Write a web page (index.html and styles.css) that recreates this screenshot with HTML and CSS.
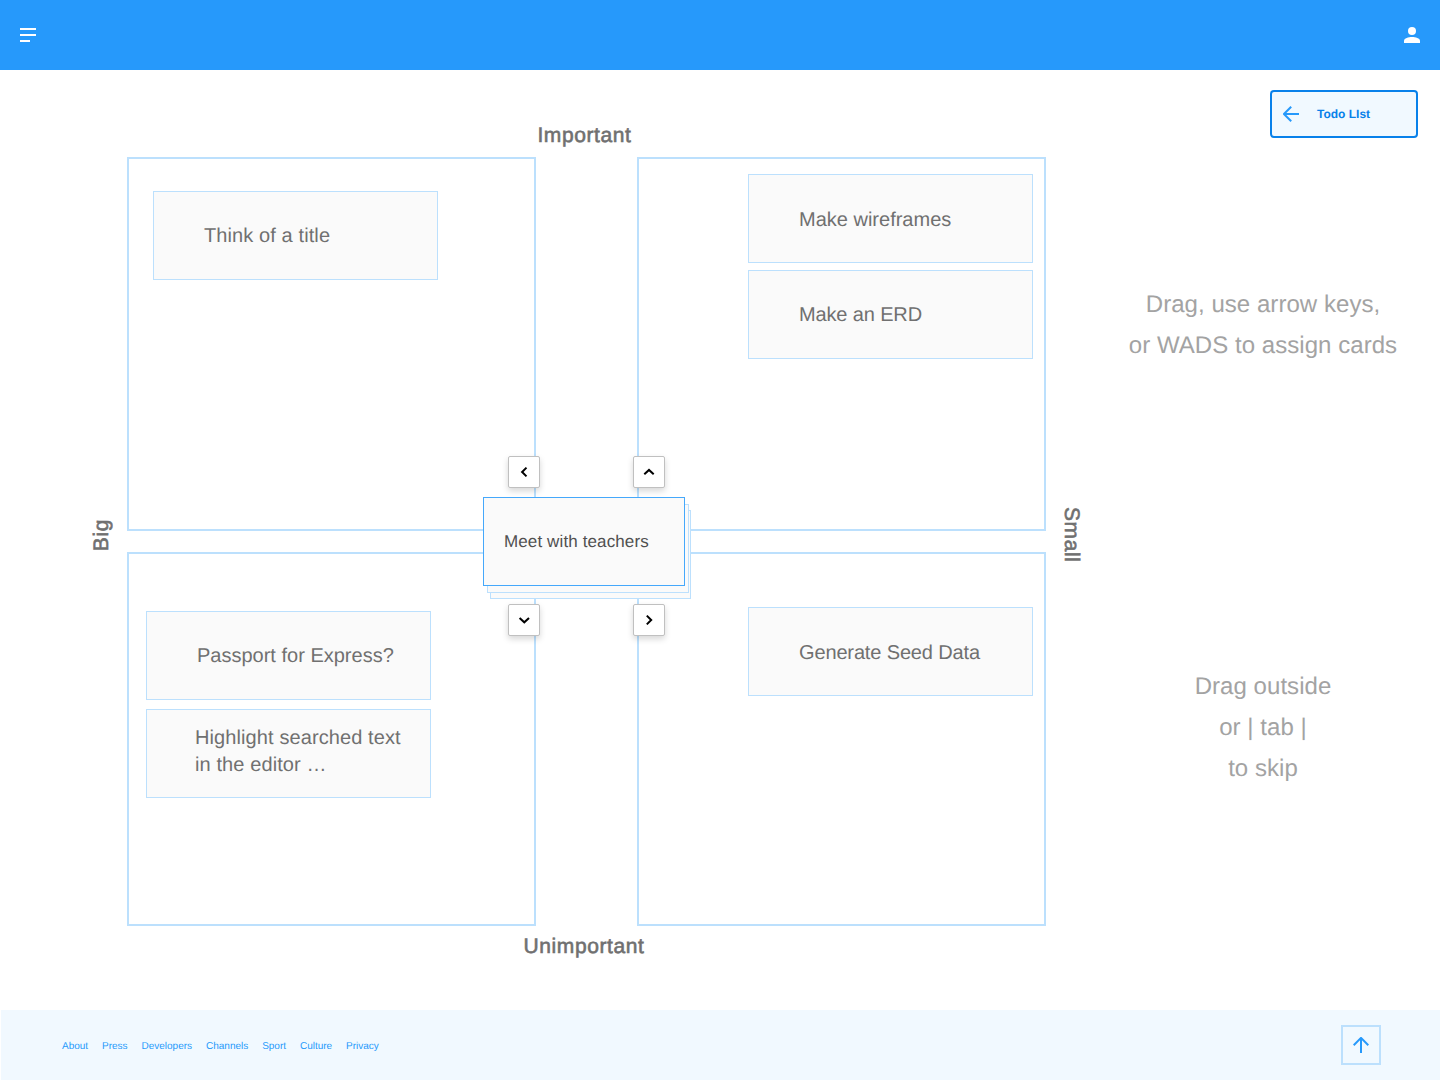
FILE: index.html
```html
<!DOCTYPE html>
<html lang="en">
<head>
<meta charset="utf-8">
<title>Todo List</title>
<link rel="stylesheet" href="styles.css">
</head>
<body>
<header class="topbar">
  <svg class="icon-menu" width="16" height="14" viewBox="0 0 16 14" fill="#fff"><path d="M0 0h16v2H0zM0 6h16v2H0zM0 12h10v2H0z"/></svg>
  <svg class="icon-user" width="16" height="16" viewBox="0 0 16 16" fill="#fff"><circle cx="8" cy="4" r="4"/><path d="M0 16v-2.200C0 11.200 4.500 10 8 10s8 1.200 8 3.800V16z"/></svg>
</header>
<main class="main">
  <div class="side side-left"><span class="axis axis-big">Big</span></div>
  <section class="matrix">
    <h2 class="axis axis-top">Important</h2>
    <div class="board">
      <div class="quadrant q1">
        <div class="card card-loose">Think of a title</div>
      </div>
      <div class="quadrant q2">
        <div class="card card-low">Make wireframes</div>
        <div class="card card-tight">Make an ERD</div>
      </div>
      <div class="quadrant q3">
        <div class="card">Passport for Express?</div>
        <div class="card card-loose card-long">Highlight searched text<br>in the editor …</div>
      </div>
      <div class="quadrant q4">
        <div class="card card-low card-tight">Generate Seed Data</div>
      </div>
      <div class="picker">
        <div class="sheet sheet-3"></div>
        <div class="sheet sheet-2"></div>
        <div class="sheet current">Meet with teachers</div>
        <button class="move move-left"><svg width="32" height="32" viewBox="0 0 32 32"><path d="M18.500 11.600 14.100 16l4.400 4.400"/></svg></button>
        <button class="move move-up"><svg width="32" height="32" viewBox="0 0 32 32"><path d="M11.300 18.300 16 13.900l4.700 4.400"/></svg></button>
        <button class="move move-down"><svg width="32" height="32" viewBox="0 0 32 32"><path d="M11.600 13.900 16.300 18.300l4.700-4.400"/></svg></button>
        <button class="move move-right"><svg width="32" height="32" viewBox="0 0 32 32"><path d="M13.800 11.600 18.200 16l-4.400 4.400"/></svg></button>
      </div>
    </div>
    <h2 class="axis axis-bottom">Unimportant</h2>
  </section>
  <div class="side side-right"><span class="axis axis-small">Small</span></div>
  <aside class="help">
    <a class="todo" href="#">
      <svg width="16" height="16" viewBox="0 0 16 16" fill="none" stroke="#2699fb" stroke-width="2"><path d="M8.200.7.900 8l7.300 7.300M1.500 8H16"/></svg>
      <span>Todo LIst</span>
    </a>
    <p class="hint hint-assign">Drag, use arrow keys,<br>or WADS to assign cards</p>
    <p class="hint hint-skip">Drag outside<br>or | tab |<br>to skip</p>
  </aside>
</main>
<footer class="footer">
  <nav class="links">
    <a href="#">About</a><a href="#">Press</a><a href="#">Developers</a><a href="#">Channels</a><a href="#">Sport</a><a href="#">Culture</a><a href="#">Privacy</a>
  </nav>
  <a class="to-top" href="#"><svg width="16" height="16" viewBox="0 0 16 16" fill="none" stroke="#2699fb" stroke-width="2"><path d="M.7 8.200 8 .9l7.300 7.300M8 1.500V16"/></svg></a>
</footer>
</body>
</html>
```
FILE: styles.css
```css
* { box-sizing: border-box; }

body {
  margin: 0;
  height: 1080px;
  display: flex;
  flex-direction: column;
  background: #fff;
  font-family: "Liberation Sans", Arial, sans-serif;
  text-rendering: geometricPrecision;
  overflow: hidden;
}

a { text-decoration: none; color: inherit; }

.topbar {
  height: 70px;
  padding: 0 20px;
  display: flex;
  align-items: center;
  justify-content: space-between;
  background: #2699fb;
}

.main {
  height: 940px;
  display: grid;
  grid-template-columns: 127px 919px 54px 1fr;
}

.matrix { display: flex; flex-direction: column; }

.axis {
  margin: 0;
  font-size: 21px;
  font-weight: 400;
  line-height: 24px;
  letter-spacing: 0.6px;
  color: #707070;
  -webkit-text-stroke: 0.6px #707070;
}

.axis-top { padding: 54px 4px 9px 0; text-align: center; }
.axis-bottom { padding: 9px 5px 0 0; text-align: center; }

.side { display: flex; align-items: center; padding-bottom: 10px; }
.side-left { padding-left: 90px; }
.side-right { padding-left: 13px; }
.axis-big { writing-mode: vertical-rl; transform: rotate(180deg); }
.axis-small { writing-mode: vertical-rl; }

.board {
  position: relative;
  display: grid;
  grid-template-columns: 409px 409px;
  grid-template-rows: 374px 374px;
  gap: 21px 101px;
}

.quadrant {
  display: flex;
  flex-direction: column;
  border: 2px solid #bce0fd;
}

.q1 { padding: 32px 0 0 24px; }
.q2 { padding: 15px 11px 0 0; align-items: flex-end; gap: 7px; }
.q3 { padding: 57px 0 0 17px; gap: 9px; }
.q4 { padding: 53px 11px 0 0; align-items: flex-end; }

.card {
  width: 285px;
  height: 89px;
  padding: 2px 0 0 50px;
  display: flex;
  align-items: center;
  background: #fafafa;
  border: 1px solid #bce0fd;
  font-size: 20px;
  line-height: 27px;
  color: #707070;
}

.card-loose { letter-spacing: 0.1px; }
.card-tight { letter-spacing: -0.14px; }
.card-low { padding-top: 4px; }
.card-long { padding: 0 0 3px 48px; }

/* Stack of unassigned cards over the middle of the board */
.picker { position: absolute; left: 356px; top: 299px; width: 209px; height: 181px; }

.sheet {
  position: absolute;
  width: 202px;
  height: 89px;
  background: #fafafa;
  border: 1px solid #bce0fd;
}

.sheet-3 { left: 7px; top: 54px; width: 201px; }
.sheet-2 { left: 4px; top: 48px; }

.current {
  left: 0;
  top: 41px;
  padding: 1px 0 0 20px;
  display: flex;
  align-items: center;
  border-color: #45a8fb;
  font-size: 17px;
  letter-spacing: 0.12px;
  color: #505050;
}

.move {
  position: absolute;
  width: 32px;
  height: 32px;
  padding: 0;
  display: flex;
  align-items: center;
  justify-content: center;
  background: #fff;
  border: 1px solid #c0c0c0;
  border-radius: 2px;
  box-shadow: 0 3px 6px rgba(0, 0, 0, 0.16);
}

.move svg { flex: none; fill: none; stroke: #000; stroke-width: 2; }
.move-left { left: 25px; top: 0; }
.move-up { left: 150px; top: 0; }
.move-down { left: 25px; top: 148px; }
.move-right { left: 150px; top: 148px; }

.help {
  display: flex;
  flex-direction: column;
  align-items: center;
  padding: 20px 14px 0 0;
}

.todo {
  align-self: flex-end;
  width: 148px;
  height: 48px;
  margin-right: 8px;
  padding-left: 11px;
  display: flex;
  align-items: center;
  gap: 18px;
  background: #f1f9ff;
  border: 2px solid #0881ea;
  border-radius: 4px;
  color: #0881ea;
  font-size: 12px;
  font-weight: 700;
}

.hint {
  margin: 0;
  font-size: 24px;
  line-height: 41px;
  letter-spacing: 0.05px;
  text-align: center;
  color: #a3a3a3;
}

.hint-assign { margin-top: 146px; }
.hint-skip { margin-top: 300px; }

.footer {
  height: 70px;
  margin-left: 1px;
  padding: 0 59px 0 61px;
  display: flex;
  align-items: center;
  justify-content: space-between;
  background: #f1f9ff;
}

.links {
  display: flex;
  gap: 13.900px;
  padding-top: 4px;
  font-size: 10px;
  line-height: 12px;
  color: #2699fb;
}

.to-top {
  width: 40px;
  height: 40px;
  display: flex;
  align-items: center;
  justify-content: center;
  border: 2px solid #bce0fd;
}
```
